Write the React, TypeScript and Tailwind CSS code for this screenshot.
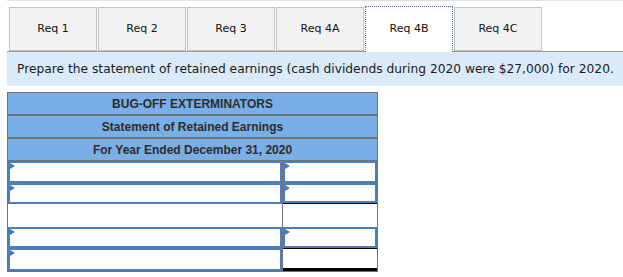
import React from "react";

const tabs = ["Req 1", "Req 2", "Req 3", "Req 4A", "Req 4B", "Req 4C"];

function Flag() {
  return (
    <span className="absolute left-0 top-0 w-0 h-0 border-t-[3px] border-b-[3px] border-l-[5px] border-t-transparent border-b-transparent border-l-[#3d7cc9]" />
  );
}

function InputBox({ extra = "" }: { extra?: string }) {
  return (
    <div className={`relative h-full w-full border-2 border-[#4b7fc0] bg-white ${extra}`}>
      <Flag />
    </div>
  );
}

type Row = { h: string; left: boolean; right: "input" | "blank" | "inputUnder" | "total" };

const rows: Row[] = [
  { h: "h-[22px]", left: true, right: "input" },
  { h: "h-[21px]", left: true, right: "inputUnder" },
  { h: "h-[23px]", left: false, right: "blank" },
  { h: "h-[21px]", left: true, right: "input" },
  { h: "h-[23px]", left: true, right: "total" },
];

export default function App() {
  return (
    <div className="w-[623px] h-[277px] bg-white overflow-hidden" style={{ fontFamily: "'DejaVu Sans', Verdana, sans-serif" }}>
      <div className="ml-[7px] h-px bg-[#e2e2e2]" />
      <div className="ml-[7px] mt-[6px] h-[45px] flex border-b border-[#9a9a9a] pl-[2px] gap-px">
        {tabs.map((t) =>
          t === "Req 4B" ? (
            <div
              key={t}
              className="relative -mt-px -mb-px h-[46px] w-[88px] border border-b-0 border-dotted border-[#4f73a0] bg-white flex items-center justify-center text-[11px] text-[#111]"
            >
              {t}
            </div>
          ) : (
            <div
              key={t}
              className="h-[44px] w-[88px] border border-[#c3c3c3] bg-[#f2f2f2] flex items-center justify-center text-[11px] text-[#111]"
            >
              {t}
            </div>
          )
        )}
      </div>
      <div className="ml-[7px] h-[34px] bg-[#dbeaf9] flex items-center pl-[10px] text-[12.25px] text-[#1b1b1b] whitespace-nowrap">
        Prepare the statement of retained earnings (cash dividends during 2020 were $27,000) for 2020.
      </div>
      <div
        className="ml-[7px] mt-[6px] w-[371px] border border-[#717171]"
        style={{ fontFamily: "'Liberation Sans', Arial, sans-serif" }}
      >
        {["BUG-OFF EXTERMINATORS", "Statement of Retained Earnings", "For Year Ended December 31, 2020"].map((h, i) => (
          <div
            key={h}
            className={`bg-[#79aee6] flex items-center justify-center text-[12px] font-bold text-[#2d2d2d] ${
              i < 2 ? "h-[23px] border-b-2 border-[#717171]" : "h-[22px] border-b border-[#717171]"
            }`}
          >
            {h}
          </div>
        ))}
        {rows.map((r, i) => (
          <div key={i} className={`grid grid-cols-[275px_1fr] ${r.h}`}>
            <div className="border-r border-[#717171] bg-white">
              {r.left ? <InputBox /> : null}
            </div>
            <div className="bg-white">
              {r.right === "input" && <InputBox />}
              {r.right === "inputUnder" && (
                <div className="h-full border-b border-black">
                  <InputBox />
                </div>
              )}
              {r.right === "total" && <div className="h-full border-t border-black border-b-[3px]" />}
            </div>
          </div>
        ))}
      </div>
    </div>
  );
}
